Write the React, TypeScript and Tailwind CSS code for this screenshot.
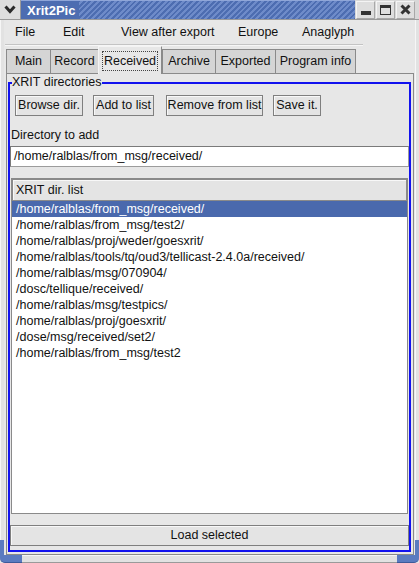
import React from "react";

// Xrit2Pic main window: "Received" tab with the XRIT directory list.

const MENU = [
  { label: "File", w: "w-[48px]" },
  { label: "Edit", w: "w-[58px]" },
  { label: "View after export", w: "w-[117px]" },
  { label: "Europe", w: "w-[64px]" },
  { label: "Anaglyph", w: "" },
];

const TABS = [
  { label: "Main", w: "w-[44px]" },
  { label: "Record", w: "w-[48px]" },
  { label: "Received", w: "w-[64px]", active: true },
  { label: "Archive", w: "w-[53px]" },
  { label: "Exported", w: "w-[60px]" },
  { label: "Program info", w: "w-[81px]", last: true },
];

const DIRS = [
  "/home/ralblas/from_msg/received/",
  "/home/ralblas/from_msg/test2/",
  "/home/ralblas/proj/weder/goesxrit/",
  "/home/ralblas/tools/tq/oud3/tellicast-2.4.0a/received/",
  "/home/ralblas/msg/070904/",
  "/dosc/tellique/received/",
  "/home/ralblas/msg/testpics/",
  "/home/ralblas/proj/goesxrit/",
  "/dose/msg/received/set2/",
  "/home/ralblas/from_msg/test2",
];

function TitleButton({ children }: { children: React.ReactNode }): React.ReactElement {
  return (
    <div className="w-[19px] h-[18px] flex items-center justify-center bg-[#dedede] border border-[#f4f4f4] border-r-[#a8a8a8] border-b-[#a8a8a8]">
      {children}
    </div>
  );
}

function TitleBar(): React.ReactElement {
  return (
    <div className="h-[20px] flex bg-[#d8d8d8] border-b border-[#9a9a9a]">
      <div className="w-[21px] flex items-center justify-center bg-[#dedede] border-r border-[#9a9a9a]">
        <svg width="12" height="9" viewBox="0 0 12 9">
          <path d="M1.5 1.5 L6 6.5 L10.5 1.5" fill="none" stroke="#2b2b2b" strokeWidth="3" />
        </svg>
      </div>
      <div className="flex-1 flex bg-[repeating-linear-gradient(135deg,#4d6db1_0px,#4d6db1_2px,#6e8bc9_2px,#6e8bc9_4px)] border-t border-[#8fa6d8]">
        <span className="bg-[#4d6db1] pl-[6px] pr-[4px] text-white font-bold text-[13px] leading-[19px]">
          Xrit2Pic
        </span>
      </div>
      <div className="w-[64px] flex items-center gap-[1px] pl-[1px] pr-[2px]">
        <TitleButton>
          <div className="w-[10px] h-[4px] mt-[6px] bg-[#333]" />
        </TitleButton>
        <TitleButton>
          <div className="w-[11px] h-[10px] border border-[#333] border-t-[3px]" />
        </TitleButton>
        <TitleButton>
          <svg width="11" height="11" viewBox="0 0 11 11">
            <path d="M1.5 1.5 L9.5 9.5 M9.5 1.5 L1.5 9.5" stroke="#333" strokeWidth="3" />
          </svg>
        </TitleButton>
      </div>
    </div>
  );
}

function Button({ label, className }: { label: string; className: string }): React.ReactElement {
  return (
    <div
      className={`h-[21px] flex items-center justify-center bg-[#e4e4e4] border border-[#7f7f7f] shadow-[inset_1px_1px_0_#f8f8f8] ${className}`}
    >
      {label}
    </div>
  );
}

function SideFrame(): React.ReactElement {
  return (
    <div className="w-[4px] flex flex-col">
      <div className="flex-1 bg-[#e2e2e2] border-l border-[#f6f6f6]" />
      <div className="h-[15px] bg-[#5b7bc0]" />
    </div>
  );
}

export default function App(): React.ReactElement {
  return (
    <div className="w-[419px] h-[563px] flex flex-col bg-[#e7e7e7] text-[#111] text-[12.5px] font-['Liberation_Sans',Arial,sans-serif] overflow-hidden">
      <TitleBar />

      <div className="flex-1 flex min-h-0">
        <SideFrame />

        <div className="flex-1 flex flex-col min-w-0 pl-[2px] pr-[1px]">
          {/* Menu bar */}
          <div className="h-[24px] flex items-center pl-[9px]">
            {MENU.map((m) => (
              <span key={m.label} className={m.w}>
                {m.label}
              </span>
            ))}
          </div>
          <div className="w-[358px] -ml-[1px] h-[2px] border-t border-[#c4c4c4] border-b border-b-[#f6f6f6]" />

          {/* Notebook tabs */}
          <div className="h-[27px] flex items-end">
            {TABS.map((t) =>
              t.active ? (
                <div
                  key={t.label}
                  className={`${t.w} h-[28px] -mb-[1px] relative z-10 flex items-center justify-center bg-[#e7e7e7] border-t border-l border-r border-[#8a8a8a] border-l-[#f4f4f4] border-t-[#f4f4f4]`}
                >
                  <span className="px-[1px] h-[20px] leading-[18px] border border-dotted border-[#444]">
                    {t.label}
                  </span>
                </div>
              ) : (
                <div
                  key={t.label}
                  className={`${t.w} h-[24px] flex items-center justify-center bg-[#d5d5d5] border-t border-l border-[#8a8a8a] ${t.last ? "border-r" : ""}`}
                >
                  {t.label}
                </div>
              ),
            )}
          </div>

          {/* Tab page */}
          <div className="flex-1 flex flex-col min-h-0 border border-[#8a8a8a] pl-[1px] pr-[2px] pb-[2px]">
            <div className="relative flex-1 flex flex-col min-h-0 mt-[8px] border-2 border-[#1212ee] pb-[4px]">
              <span className="absolute -top-[9px] left-[2px] bg-[#e7e7e7] pr-[1px] leading-[15px]">
                XRIT directories
              </span>

              <div className="flex mt-[11px] pl-[5px]">
                <Button label="Browse dir." className="w-[68px]" />
                <Button label="Add to list" className="w-[61px] ml-[10px]" />
                <Button label="Remove from list" className="w-[97px] ml-[12px]" />
                <Button label="Save it." className="w-[48px] ml-[10px]" />
              </div>

              <div className="mt-[11px] pl-[1px] leading-[16px]">Directory to add</div>
              <div className="mt-[3px] h-[21px] flex items-center pl-[3px] bg-white border border-[#9c9c9c] border-t-[#7a7a7a] border-l-[#7a7a7a]">
                /home/ralblas/from_msg/received/
              </div>

              {/* Directory list */}
              <div className="flex-1 min-h-0 mt-[11px] mx-[1px] flex flex-col bg-white border border-[#8a8a8a]">
                <div className="h-[22px] flex items-center pl-[3px] bg-[#e4e4e4] border border-[#8a8a8a] shadow-[inset_1px_1px_0_#f8f8f8]">
                  XRIT dir. list
                </div>
                {DIRS.map((d, i) => (
                  <div
                    key={`${d}-${i}`}
                    className={`h-[16px] leading-[16px] pl-[4px] whitespace-nowrap ${
                      i === 0 ? "bg-[#4a69ad] text-white" : ""
                    }`}
                  >
                    {d}
                  </div>
                ))}
              </div>

              <Button label="Load selected" className="mt-[11px]" />
            </div>
          </div>
        </div>

        <SideFrame />
      </div>

      {/* Bottom window frame */}
      <div className="h-[8px] flex">
        <div className="w-[22px] bg-[#5b7bc0] rounded-bl-[5px] border-b border-[#3d5a9a]" />
        <div className="flex-1 bg-[#e2e2e2] border-t border-[#f6f6f6] border-b border-b-[#9a9a9a]" />
        <div className="w-[22px] bg-[#5b7bc0] rounded-br-[5px] border-b border-[#3d5a9a]" />
      </div>
    </div>
  );
}
